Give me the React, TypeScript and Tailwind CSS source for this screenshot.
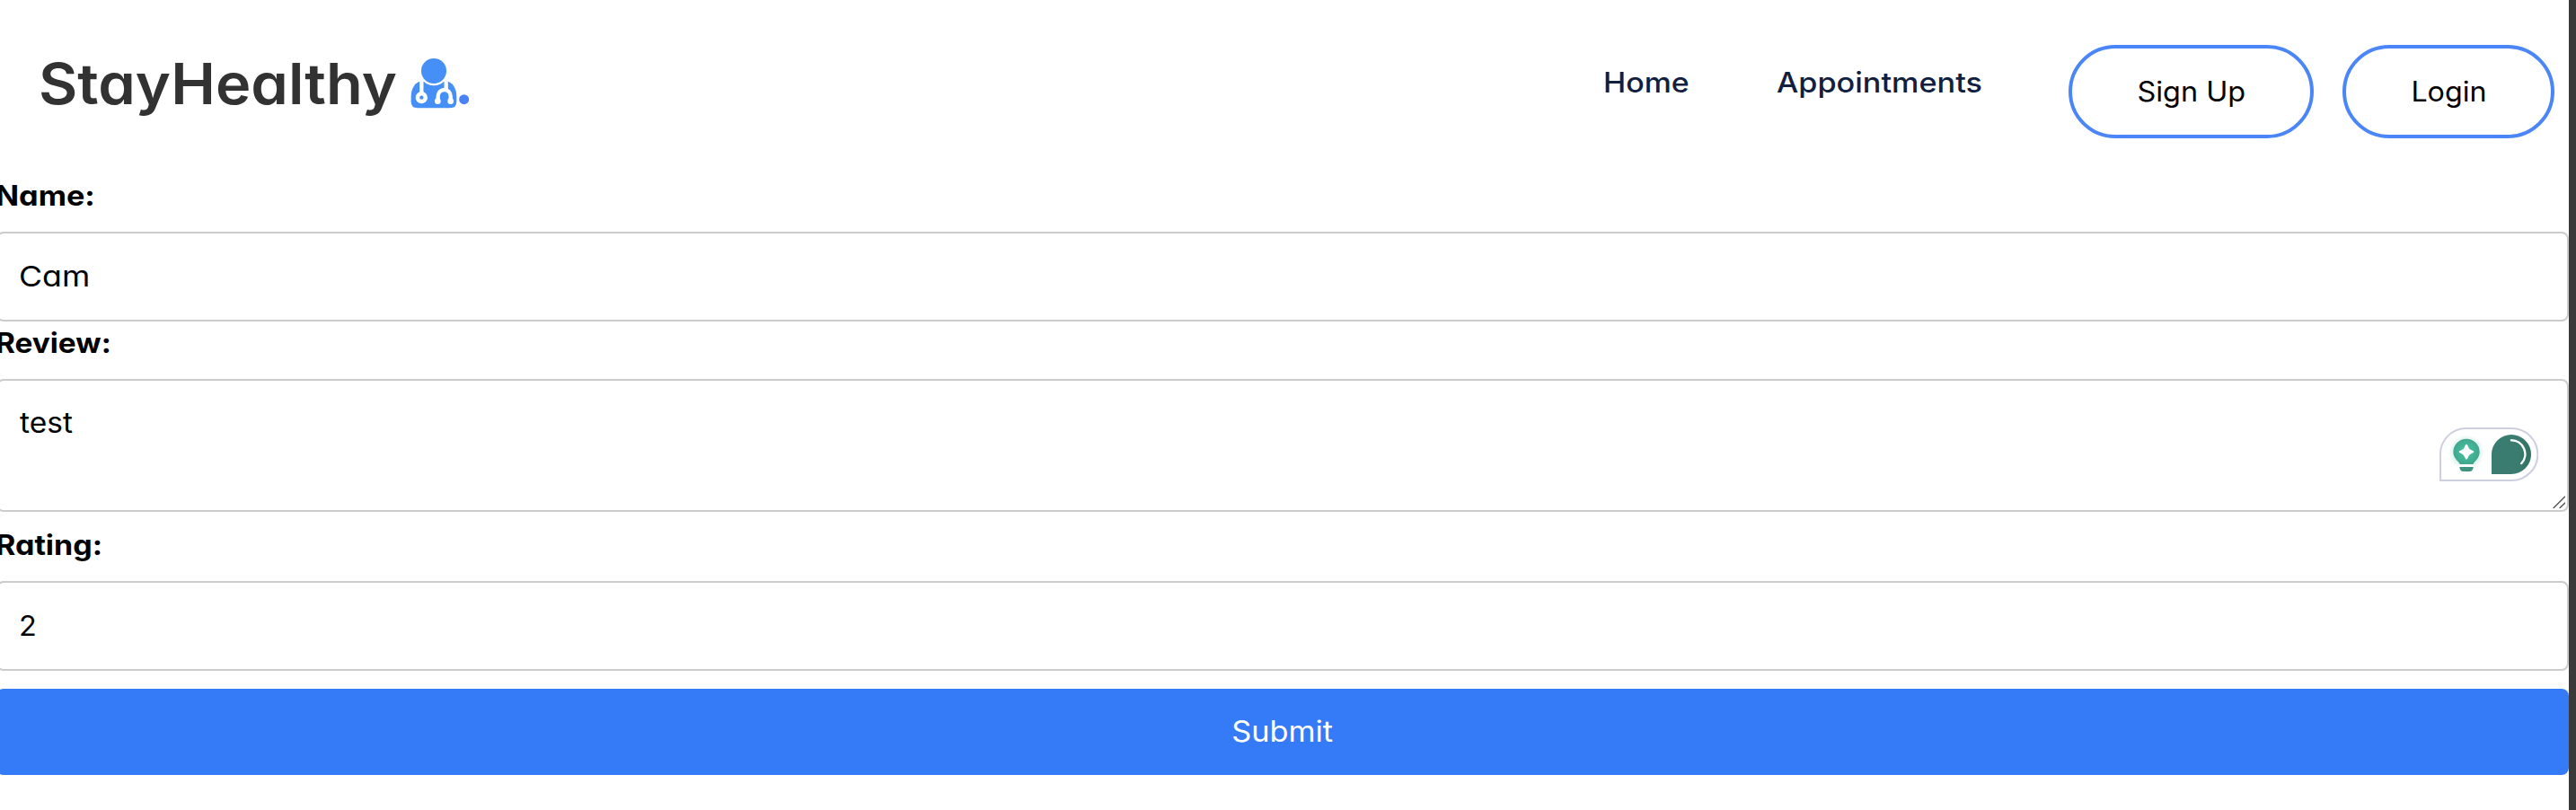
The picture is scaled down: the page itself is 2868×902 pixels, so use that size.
import type { ReactNode } from "react";

function DoctorIcon() {
  return (
    <svg viewBox="50 40 200 175" className="h-[58.33px] w-[66.67px]" aria-hidden="true">
      <path
        d="M80 120C62 128 52 146 52 172V188Q52 209 74 209H182Q204 209 204 188V172C204 146 194 128 176 120Z"
        fill="#458ff6"
      />
      <circle cx="128" cy="85" r="49" fill="#fff" />
      <circle cx="128" cy="85" r="42" fill="#458ff6" />
      <g fill="none" stroke="#fff" strokeWidth="13">
        <path d="M87 112V160" />
        <path d="M169 112V150" />
        <path d="M142 186V169A21 21 0 0 1 184 169V186" />
      </g>
      <circle cx="87" cy="174" r="20" fill="#fff" />
      <circle cx="87" cy="174" r="6.5" fill="#458ff6" />
      <circle cx="141" cy="186" r="10" fill="#fff" />
      <circle cx="184" cy="186" r="10" fill="#fff" />
      <circle cx="229" cy="180" r="16.5" fill="#4a82f5" />
    </svg>
  );
}

function AssistantBadge() {
  return (
    <svg viewBox="48 33 330 180" className="absolute top-[52px] right-8 h-[60px] w-[110px]" aria-hidden="true">
      <defs>
        <radialGradient id="bulb">
          <stop offset="0.3" stopColor="#45bd9f" />
          <stop offset="1" stopColor="#41a68d" />
        </radialGradient>
        <radialGradient id="halo">
          <stop offset="0.6" stopColor="#45bd9f" stopOpacity="0.25" />
          <stop offset="1" stopColor="#45bd9f" stopOpacity="0" />
        </radialGradient>
        <linearGradient id="drop">
          <stop offset="0.65" stopColor="#3a7d70" />
          <stop offset="1" stopColor="#327062" />
        </linearGradient>
      </defs>
      <path
        d="M51 210V122A86 86 0 0 1 137 36H289A87 87 0 0 1 289 210Z"
        fill="#fff"
        stroke="#cdcfdf"
        strokeWidth="6"
      />
      <circle cx="138" cy="117" r="60" fill="url(#halo)" />
      <path d="M116 156C116 149 94 138 94 115A44 44 0 0 1 182 115C182 138 161 149 161 156Z" fill="url(#bulb)" />
      <path d="M110 156H166V165H110Z" fill="#fff" />
      <path d="M115 165H161Q160 180 148 180H128Q116 180 115 165Z" fill="#3f947f" />
      <path
        d="M138 89Q142 89 144 98Q147 106 155 109Q163 112 163 114Q163 117 155 120Q147 123 144 131Q141 140 138 140Q135 140 132 131Q129 123 121 120Q113 117 113 114Q113 112 121 109Q129 106 132 98Q134 89 138 89Z"
        fill="#fff"
      />
      <path d="M222 189V123A66 66 0 0 1 354 123A66 66 0 0 1 288 189Z" fill="url(#drop)" />
      <path d="M288 76A46 46 0 0 1 322 153" fill="none" stroke="#fff" strokeWidth="7.5" strokeLinecap="round" />
    </svg>
  );
}

function Label({ className, children }: { className: string; children: ReactNode }) {
  return (
    <label className="ml-[-1.5px] flex h-11 items-center text-[31px] leading-[44px] font-bold text-black">
      <span className={`inline-block origin-left ${className}`}>{children}</span>
    </label>
  );
}

export default function App() {
  return (
    <div className="flex h-[902px] w-[2868px] overflow-hidden bg-[#3a3a3a] font-['Inter','Liberation_Sans',sans-serif] [font-feature-settings:'cv11']">
      <div className="h-full w-[2860px] shrink-0 overflow-hidden bg-white">
        <header className="flex h-[196px] items-start justify-between pr-4 pl-[43px]">
          <div className="flex">
            <span className="mt-[53px] w-[414px] origin-left scale-x-[1.058] text-[63px] leading-[80px] font-semibold whitespace-nowrap text-[#323232]">
              StayHealthy
            </span>
            <div className="mt-[63.5px]">
              <DoctorIcon />
            </div>
          </div>
          <nav className="flex items-start text-[31px] leading-10 whitespace-nowrap">
            <a className="mt-[72px] w-[193px] font-medium text-[#11203f]">
              <span className="inline-block origin-left scale-x-[1.093]">Home</span>
            </a>
            <a className="mt-[72px] w-[325px] font-medium text-[#11203f]">
              <span className="inline-block origin-left scale-x-[1.104]">Appointments</span>
            </a>
            <button className="mt-[50px] mr-8 h-[104px] w-[273px] rounded-full border-4 border-[#4a86f7] text-black">
              <span className="inline-block scale-x-[1.045]">Sign Up</span>
            </button>
            <button className="mt-[50px] h-[104px] w-[236px] rounded-full border-4 border-[#4a86f7] text-black">
              <span className="inline-block scale-x-[1.04]">Login</span>
            </button>
          </nav>
        </header>

        <form className="-ml-1 flex flex-col">
          <Label className="scale-x-[1.105]">Name:</Label>
          <div className="mt-[18px] flex h-[100px] items-center rounded-[8px] border-2 border-[#ccc] pl-[23px] text-[31.5px] text-black">
            <span className="inline-block origin-left scale-x-[1.135]">Cam</span>
          </div>

          <div className="mt-0.5">
            <Label className="scale-x-[1.077]">Review:</Label>
          </div>
          <div className="relative mt-[18px] h-[148px] rounded-[8px] border-2 border-[#ccc] pt-[25px] pl-6 text-[31.5px] leading-[44px] text-black">
            <span className="inline-block origin-left scale-x-[1.065]">test</span>
            <AssistantBadge />
            <svg viewBox="0 0 14 14" className="absolute top-32 right-0.5 size-3.5" aria-hidden="true">
              <path d="M0.7 14L14 0.7M7.7 14L14 7.7" stroke="#555" strokeWidth="1.4" />
            </svg>
          </div>

          <div className="mt-[15px]">
            <Label className="scale-x-[1.098]">Rating:</Label>
          </div>
          <div className="mt-[18px] flex h-[100px] items-center rounded-[8px] border-2 border-[#ccc] pl-[23px] text-[31.5px] text-black">
            <span className="inline-block origin-left scale-x-[1.03]">2</span>
          </div>

          <button
            type="button"
            className="mt-5 h-24 rounded-[8px] bg-[#357af6] text-[32px] leading-[44px] text-white"
          >
            <span className="inline-block scale-x-[1.072]">Submit</span>
          </button>
        </form>
      </div>
    </div>
  );
}
